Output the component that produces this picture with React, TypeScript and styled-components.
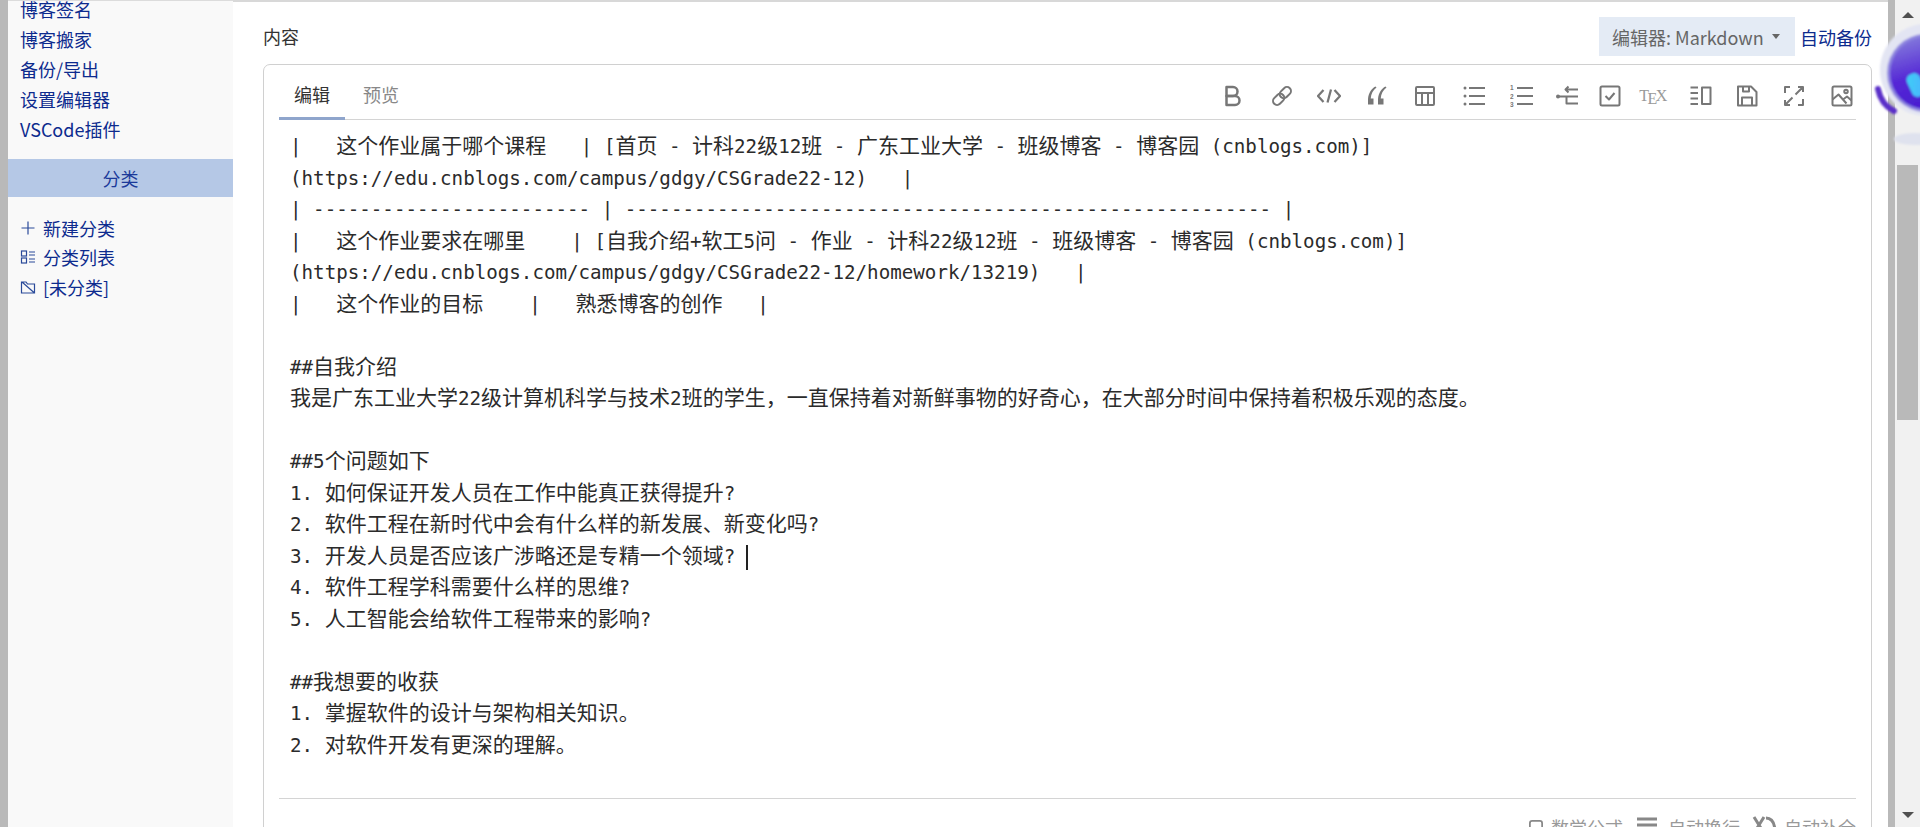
import React from "react";
import styled, { createGlobalStyle } from "styled-components";

const Global = createGlobalStyle`
  html, body { margin: 0; padding: 0; height: 100%; overflow: hidden; background: #fff; }
  body { font-family: "Noto Sans CJK SC", "Liberation Sans", sans-serif; }
  * { box-sizing: border-box; }
`;

const Page = styled.div`
  position: relative;
  display: flex;
  width: 1920px;
  height: 827px;
  overflow: hidden;
`;
const Edge = styled.div<{ $w: number }>`
  flex: 0 0 ${(p) => p.$w}px;
  background: #b9b9b9;
`;
const Sidebar = styled.aside`
  flex: 0 0 225px;
  background: #f9f9f9;
  border-top: 1px solid #dcdcdc;
  font-size: 18px;
  overflow: hidden;
`;
const NavList = styled.div`
  margin-top: -7px;
  padding: 0 0 0 12px;
`;
const NavLink = styled.div`
  height: 30px;
  line-height: 30px;
  color: #0d2b8e;
  white-space: nowrap;
`;
const CategoryBar = styled.div`
  margin-top: 15px;
  height: 38px;
  line-height: 38px;
  background: #b5c8e6;
  color: #1b3a9a;
  text-align: center;
  font-size: 18px;
`;
const CategoryList = styled.div`
  margin-top: 16px;
  padding-left: 12px;
`;
const CategoryRow = styled.div`
  display: flex;
  align-items: center;
  gap: 7px;
  height: 29.5px;
  color: #0d2b8e;
  font-size: 18px;
  white-space: nowrap;
`;
const SideIcon = styled.svg`
  flex: 0 0 16px;
  width: 16px;
  height: 16px;
  fill: none;
  stroke: #2a4a9a;
  stroke-width: 1.2;
`;

const Main = styled.main`
  flex: 1 1 auto;
  min-width: 0;
  border-top: 2px solid #d8d8d8;
  padding: 0 16px 0 30px;
`;
const HeaderRow = styled.div`
  display: flex;
  align-items: center;
  height: 62px;
  padding: 15px 0 8px;
`;
const FieldLabel = styled.div`
  font-size: 18px;
  line-height: 39px;
  color: #333;
  margin-right: auto;
`;
const EditorSwitch = styled.div`
  display: flex;
  align-items: center;
  gap: 8px;
  width: 196px;
  height: 39px;
  padding-left: 13px;
  background: #e4ebf5;
  color: #666;
  font-size: 18px;
  white-space: nowrap;
`;
const Caret = styled.span`
  width: 0;
  height: 0;
  border-left: 4.5px solid transparent;
  border-right: 4.5px solid transparent;
  border-top: 5px solid #666;
`;
const BackupLink = styled.div`
  margin-left: 5px;
  color: #0d2b8e;
  font-size: 18px;
  white-space: nowrap;
`;
const Panel = styled.section`
  border: 1px solid #d0d0d0;
  border-radius: 7px 7px 0 0;
  padding: 0 15px;
  background: #fff;
`;
const TabBar = styled.div`
  display: flex;
  align-items: stretch;
  height: 55px;
  border-bottom: 1px solid #d4d4d4;
`;
const Tab = styled.div<{ $active?: boolean }>`
  padding: 0 15px;
  margin-right: 3px;
  height: 55px;
  line-height: 58px;
  font-size: 18px;
  color: ${(p) => (p.$active ? "#333" : "#888")};
  border-bottom: 3px solid ${(p) => (p.$active ? "#8fa5cc" : "transparent")};
`;
const Toolbar = styled.div`
  margin-left: auto;
  margin-right: -10px;
  display: flex;
  align-items: center;
  padding-top: 7px;
`;
const ToolButton = styled.div<{ $w: number }>`
  flex: 0 0 ${(p) => p.$w}px;
  display: flex;
  justify-content: center;
  align-items: center;
`;
const ToolSvg = styled.svg`
  width: 24px;
  height: 24px;
  fill: none;
  stroke: #777;
  stroke-width: 4;
  stroke-linecap: butt;
  stroke-linejoin: round;
  text { fill: #777; stroke: none; font-family: "Liberation Sans", sans-serif; font-size: 13px; font-weight: 700; }
`;
const TexMark = styled.span`
  font-family: "Liberation Serif", serif;
  font-size: 16px;
  line-height: 24px;
  margin-right: 3px;
  color: #999;
  white-space: nowrap;
  letter-spacing: -1.5px;
`;
const TexE = styled.span`
  position: relative;
  top: 3px;
`;
const EditorBody = styled.div`
  height: 679px;
  padding: 9px 0 0 11px;
  border-bottom: 1px solid #d4d4d4;
  overflow: hidden;
`;
const Line = styled.div`
  height: 31.5px;
  line-height: 31.5px;
  white-space: pre;
  font-family: "DejaVu Sans Mono", monospace;
  font-size: 19.18px;
  color: #2b2b2b;
  &::before {
    content: "\\200b";
    font-family: "Noto Sans CJK SC", sans-serif;
    font-size: 21px;
  }
`;
const Han = styled.span`
  font-family: "Noto Sans CJK SC", sans-serif;
  font-size: 21px;
`;
const TextCaret = styled.span`
  display: inline-block;
  width: 2px;
  height: 25px;
  margin-left: -1px;
  background: #222;
  vertical-align: middle;
`;
const StatusBar = styled.div`
  display: flex;
  justify-content: flex-end;
  align-items: center;
  height: 50px;
  padding-top: 5px;
  color: #999;
  font-size: 18px;
`;
const StatusItem = styled.div<{ $gap: number }>`
  display: flex;
  align-items: center;
  margin-left: 12px;
  gap: ${(p) => p.$gap}px;
  white-space: nowrap;
`;
const StatusIcon = styled.svg<{ $size: number }>`
  width: ${(p) => p.$size}px;
  height: ${(p) => p.$size}px;
  fill: none;
  stroke: #888;
  stroke-width: 3;
`;

const Scrollbar = styled.div`
  flex: 0 0 25px;
  display: flex;
  flex-direction: column;
  background: #f1f1f1;
  padding-top: 12px;
`;
const ArrowUp = styled.span`
  align-self: center;
  width: 0;
  height: 0;
  border-left: 6px solid transparent;
  border-right: 6px solid transparent;
  border-bottom: 6px solid #505050;
`;
const ArrowDown = styled.span`
  align-self: center;
  margin-top: auto;
  margin-bottom: 9px;
  width: 0;
  height: 0;
  border-left: 6px solid transparent;
  border-right: 6px solid transparent;
  border-top: 6px solid #505050;
`;
const Thumb = styled.div`
  margin: 147px 2px 0;
  height: 255px;
  background: #b9b9b9;
`;
const Robot = styled.svg`
  position: absolute;
  left: 1870px;
  top: 15px;
  width: 50px;
  height: 140px;
`;

const HAN = /([\u3000-\u9fff\uff00-\uffef]+)/;
const Txt = ({ children }: { children: string }) => (
  <>
    {children.split(HAN).map((part, i) =>
      i % 2 === 1 ? <Han key={i}>{part}</Han> : part
    )}
  </>
);

const lines: string[] = [
  "|   这个作业属于哪个课程   | [首页 - 计科22级12班 - 广东工业大学 - 班级博客 - 博客园 (cnblogs.com)]",
  "(https://edu.cnblogs.com/campus/gdgy/CSGrade22-12)   |",
  "| ------------------------ | -------------------------------------------------------- |",
  "|   这个作业要求在哪里    | [自我介绍+软工5问 - 作业 - 计科22级12班 - 班级博客 - 博客园 (cnblogs.com)]",
  "(https://edu.cnblogs.com/campus/gdgy/CSGrade22-12/homework/13219)   |",
  "|   这个作业的目标    |   熟悉博客的创作   |",
  "",
  "##自我介绍",
  "我是广东工业大学22级计算机科学与技术2班的学生，一直保持着对新鲜事物的好奇心，在大部分时间中保持着积极乐观的态度。",
  "",
  "##5个问题如下",
  "1. 如何保证开发人员在工作中能真正获得提升?",
  "2. 软件工程在新时代中会有什么样的新发展、新变化吗?",
  "3. 开发人员是否应该广涉略还是专精一个领域? ",
  "4. 软件工程学科需要什么样的思维?",
  "5. 人工智能会给软件工程带来的影响?",
  "",
  "##我想要的收获",
  "1. 掌握软件的设计与架构相关知识。",
  "2. 对软件开发有更深的理解。",
];

const navItems = ["博客签名", "博客搬家", "备份/导出", "设置编辑器", "VSCode插件"];

const Svg48 = ({ children }: { children: React.ReactNode }) => (
  <ToolSvg viewBox="0 0 48 48">{children}</ToolSvg>
);

const quoteMark = "M21 5C13 9 7 18 6 30V41H17V29H11.5C12 20 16 12 23 7Z";

const tools: { w: number; node: React.ReactNode }[] = [
  { w: 48.5, node: <Svg48><path d="M24 24C29 24 33 20 33 15C33 10 29 6 24 6H11V24H24Z" strokeWidth="5" /><path d="M28 42C33 42 37 38 37 33C37 28 33 24 28 24H11V42H28Z" strokeWidth="5" /></Svg48> },
  { w: 48, node: <Svg48><g transform="rotate(-45 24 24)"><rect x="2" y="16" width="25" height="16" rx="8" /><rect x="21" y="16" width="25" height="16" rx="8" /></g></Svg48> },
  { w: 47.5, node: <Svg48><path d="M13 12L2 24L13 36" strokeWidth="4.5" /><path d="M35 12L46 24L35 36" strokeWidth="4.5" /><path d="M28 11L21 37" strokeWidth="4.5" /></Svg48> },
  { w: 48, node: <Svg48><path d={quoteMark} fill="#777" stroke="none" /><path d={quoteMark} fill="#777" stroke="none" transform="translate(20 0)" /></Svg48> },
  { w: 48, node: <Svg48><rect x="6" y="6" width="36" height="36" rx="2" /><path d="M6 18H42M18 18V42M30 18V42" /></Svg48> },
  { w: 49, node: <Svg48><circle cx="6" cy="8" r="3" fill="#777" stroke="none" /><circle cx="6" cy="24" r="3" fill="#777" stroke="none" /><circle cx="6" cy="40" r="3" fill="#777" stroke="none" /><path d="M14 8H46M14 24H46M14 40H46" /></Svg48> },
  { w: 47.5, node: <Svg48><text x="0" y="12">1</text><text x="0" y="29">2</text><text x="0" y="46">3</text><path d="M14 8H46M14 24H46M14 40H46" /></Svg48> },
  { w: 43, node: <Svg48><circle cx="6" cy="25" r="4" fill="#777" stroke="none" /><path d="M8 25H46M22 11H46M27 5L21 11L27 17M23 25V39H46" /></Svg48> },
  { w: 42.5, node: <Svg48><rect x="5" y="5" width="38" height="38" rx="3" /><path d="M15 24L22 31L33 18" /></Svg48> },
  { w: 46, node: <TexMark>T<TexE>E</TexE>X</TexMark> },
  { w: 47, node: <Svg48><path d="M3 7H18M3 18H18M3 29H18M3 40H18" /><rect x="26" y="7" width="17" height="33" /></Svg48> },
  { w: 46.5, node: <Svg48><path d="M6 5H32L43 16V43H6Z" /><path d="M14 43V27H34V43M16 5V15H28V5" /></Svg48> },
  { w: 47.5, node: <Svg48><path d="M6 18V6H16M32 42H42V30M27 21L42 6M32 6H42V16M21 27L6 42M6 32V42H16" /></Svg48> },
  { w: 48, node: <Svg48><rect x="5" y="5" width="38" height="38" rx="3" /><circle cx="32" cy="15" r="3.5" /><path d="M5 31L17 21L33 39M26 31L34 25L43 33" /></Svg48> },
];

export default function App() {
  return (
    <Page>
      <Global />
      <Edge $w={8} />
      <Sidebar>
        <NavList>
          {navItems.map((t) => (
            <NavLink key={t}>{t}</NavLink>
          ))}
        </NavList>
        <CategoryBar>分类</CategoryBar>
        <CategoryList>
          <CategoryRow>
            <SideIcon viewBox="0 0 16 16"><path d="M8 1.5V14.5M1.5 8H14.5" /></SideIcon>
            新建分类
          </CategoryRow>
          <CategoryRow>
            <SideIcon viewBox="0 0 16 16"><rect x="1.5" y="2" width="5" height="5" /><rect x="1.5" y="9" width="5" height="5" /><path d="M9 3H15M9 6H15M9 10H15M9 13H15" /></SideIcon>
            分类列表
          </CategoryRow>
          <CategoryRow>
            <SideIcon viewBox="0 0 16 16"><path d="M1.5 3H6L7.5 5H14.5V14H1.5ZM2 3L14.5 14" /></SideIcon>
            [未分类]
          </CategoryRow>
        </CategoryList>
      </Sidebar>
      <Main>
        <HeaderRow>
          <FieldLabel>内容</FieldLabel>
          <EditorSwitch>
            编辑器: Markdown
            <Caret />
          </EditorSwitch>
          <BackupLink>自动备份</BackupLink>
        </HeaderRow>
        <Panel>
          <TabBar>
            <Tab $active>编辑</Tab>
            <Tab>预览</Tab>
            <Toolbar>
              {tools.map((t, i) => (
                <ToolButton key={i} $w={t.w}>{t.node}</ToolButton>
              ))}
            </Toolbar>
          </TabBar>
          <EditorBody>
            {lines.map((l, i) => (
              <Line key={i}>
                <Txt>{l}</Txt>
                {i === 13 && <TextCaret />}
              </Line>
            ))}
          </EditorBody>
          <StatusBar>
            <StatusItem $gap={8}>
              <StatusIcon $size={14} viewBox="0 0 24 24"><rect x="1.5" y="1.5" width="21" height="21" rx="4" /></StatusIcon>
              数学公式
            </StatusItem>
            <StatusItem $gap={9}>
              <StatusIcon $size={24} viewBox="0 0 24 24"><path d="M2 4H22M2 10H22M2 16H22" /></StatusIcon>
              自动换行
            </StatusItem>
            <StatusItem $gap={8}>
              <StatusIcon $size={24} viewBox="0 0 24 24"><path d="M2 2L12 18M12 2L2 18M14 3C20 3 23 8 23 18" /></StatusIcon>
              自动补全
            </StatusItem>
          </StatusBar>
        </Panel>
      </Main>
      <Edge $w={7} />
      <Scrollbar>
        <ArrowUp />
        <Thumb />
        <ArrowDown />
      </Scrollbar>
      <Robot viewBox="0 0 50 140">
        <defs>
          <linearGradient id="face" x1="0" y1="0" x2="0.3" y2="1">
            <stop offset="0" stopColor="#8a86dc" />
            <stop offset="0.6" stopColor="#5528d6" />
            <stop offset="1" stopColor="#4a1ed0" />
          </linearGradient>
          <linearGradient id="eye" x1="0" y1="0" x2="1" y2="1">
            <stop offset="0" stopColor="#3fd0f5" />
            <stop offset="1" stopColor="#4ab0ff" />
          </linearGradient>
          <filter id="soft" x="-20%" y="-20%" width="140%" height="140%">
            <feGaussianBlur stdDeviation="1" />
          </filter>
        </defs>
        <g filter="url(#soft)">
          <circle cx="56" cy="55" r="46" fill="#e3e5f3" />
          <circle cx="56" cy="58" r="39" fill="#8f86e0" />
          <circle cx="56" cy="58" r="36" fill="url(#face)" />
          <path d="M8 74C10 84 16 92 24 96" fill="none" stroke="#5a2fc8" strokeWidth="6" strokeLinecap="round" />
          <rect x="39" y="58" width="14" height="24" rx="6" transform="rotate(-25 46 70)" fill="url(#eye)" />
          <ellipse cx="44" cy="124" rx="20" ry="6" fill="#dfe2ee" />
        </g>
      </Robot>
    </Page>
  );
}
